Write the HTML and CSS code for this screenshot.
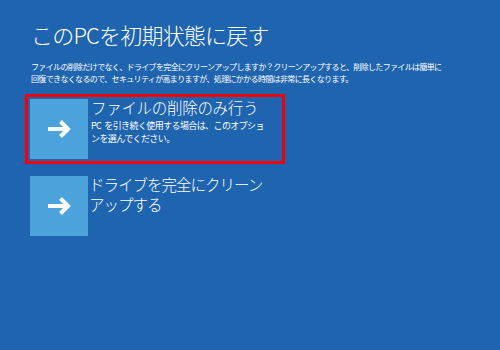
FILE: index.html
```html
<!DOCTYPE html>
<html lang="ja">
<head>
    <meta charset="UTF-8">
    <title>このPCを初期状態に戻す</title>
    <link rel="stylesheet" href="styles.css">
</head>
<body>
    <div class="page">
        <h1 class="title">このPCを初期状態に戻す</h1>
        <p class="desc">ファイルの削除だけでなく、ドライブを完全にクリーンアップしますか？クリーンアップすると、削除したファイルは簡単に<br>回復できなくなるので、セキュリティが高まりますが、処理にかかる時間は非常に長くなります。</p>

        <div class="option selected">
            <div class="tile">
                <svg width="25" height="20" viewBox="0 0 25 20">
                    <path d="M1 10H21M13.5 2.5L21 10L13.5 17.5" fill="none" stroke="#fff" stroke-width="4"/>
                </svg>
            </div>
            <div class="option-text">
                <div class="option-title">ファイルの削除のみ行う</div>
                <div class="option-sub">PC<span class="gap"> </span>を引き続く使用する場合は、このオプショ<br>ンを選んでください。</div>
            </div>
        </div>

        <div class="option">
            <div class="tile">
                <svg width="25" height="20" viewBox="0 0 25 20">
                    <path d="M1 10H21M13.5 2.5L21 10L13.5 17.5" fill="none" stroke="#fff" stroke-width="4"/>
                </svg>
            </div>
            <div class="option-text">
                <div class="option-title second">ドライブを完全にクリーン<br>アップする</div>
            </div>
        </div>
    </div>
</body>
</html>
```

FILE: styles.css
```css
html, body {
    margin: 0;
    padding: 0;
    height: 100%;
}
body {
    background-color: #1f64af;
    color: #fff;
    font-family: "Noto Sans CJK JP", sans-serif;
    overflow: hidden;
}
.page {
    padding: 18px 0 0 25px;
}
.title {
    margin: 0 0 0 6px;
    font-size: 22px;
    font-weight: 300;
    line-height: 32px;
    letter-spacing: -0.8px;
}
.desc {
    margin: 11px 0 9px 6px;
    font-size: 8px;
    line-height: 12px;
    letter-spacing: -0.65px;
}
.option {
    display: flex;
    width: 252px;
    height: 62px;
    padding: 2px 0 0 2px;
    border: 3px solid transparent;
    margin-bottom: 7px;
}
.option.selected {
    border-color: #f2000c;
}
.tile {
    width: 58px;
    height: 60px;
    flex-shrink: 0;
    background-color: #4ca3dc;
    display: flex;
    align-items: center;
    justify-content: center;
}
.option-text {
    margin: -2px 0 0 3px;
}
.option-title {
    font-size: 15.5px;
    font-weight: 300;
    line-height: 20px;
    letter-spacing: -0.3px;
}
.option-title.second {
    margin-left: -2px;
    letter-spacing: -1px;
}
.option-sub {
    margin-top: 2px;
    font-size: 9px;
    line-height: 13px;
    letter-spacing: -0.6px;
}
.gap {
    letter-spacing: 1px;
}
```
